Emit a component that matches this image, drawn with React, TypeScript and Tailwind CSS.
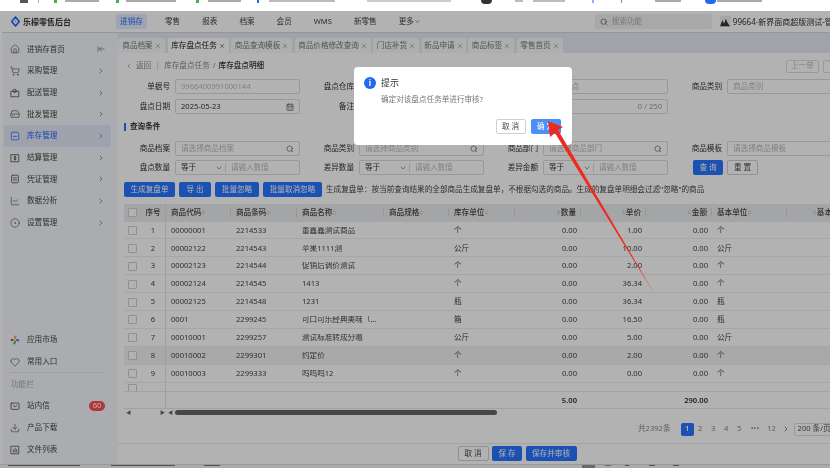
import {
  ArrowLeftToLine,
  CalendarDays,
  ChevronDown,
  ChevronLeft,
  ChevronRight,
  ChevronsUpDown,
  CircleDot,
  Download,
  HardDrive,
  Heart,
  Home,
  LineChart,
  Search,
  ShoppingCart,
  X,
} from "lucide-react";
import type { ComponentType, ReactNode } from "react";

const fontStack = "font-['Noto_Sans','Noto_Sans_CJK_SC',sans-serif]";

type IconProps = { className?: string; strokeWidth?: number };

function BoxIcon({ children, className }: { children: ReactNode; className?: string }) {
  return (
    <svg
      viewBox="0 0 12 12"
      fill="none"
      stroke="currentColor"
      strokeWidth="0.9"
      strokeLinecap="round"
      strokeLinejoin="round"
      className={className}
    >
      {children}
    </svg>
  );
}

const DeliveryIcon = ({ className }: IconProps) => (
  <BoxIcon className={className}>
    <path d="M1.5 4h9v6.5h-9z" />
    <circle cx="5.5" cy="3.5" r="2" />
  </BoxIcon>
);
const StockIcon = ({ className }: IconProps) => (
  <BoxIcon className={className}>
    <path d="M2.5 1.5h7l1 2v6a1 1 0 0 1-1 1h-7a1 1 0 0 1-1-1v-6z" />
    <path d="M4 6.5h4" />
  </BoxIcon>
);
const SettleIcon = ({ className }: IconProps) => (
  <BoxIcon className={className}>
    <path d="M1.5 2h9v8.5h-9z" />
    <path d="M7.2 4.6C6.4 3.9 4.8 4.1 4.8 5.1c0 1.3 2.4.7 2.4 2 0 1-1.6 1.2-2.4.5M6 3.5v5" />
  </BoxIcon>
);
const VoucherIcon = ({ className }: IconProps) => (
  <BoxIcon className={className}>
    <rect x="2" y="1.5" width="8" height="9" rx="1" />
    <path d="M4 4.7h4M4 7.2h4" />
  </BoxIcon>
);
const MailIcon = ({ className }: IconProps) => (
  <BoxIcon className={className}>
    <rect x="1.2" y="2.5" width="9.6" height="7.5" rx="0.8" />
    <path d="M3.8 5.2 6 7l2.2-1.8" />
  </BoxIcon>
);
const FileListIcon = ({ className }: IconProps) => (
  <BoxIcon className={className}>
    <path d="M1.5 1.5h9v9h-9z" />
    <path d="M4 8.5V6M6 8.5V3.8M8 8.5V5.5" />
  </BoxIcon>
);

const navItems = ["零售", "报表", "档案", "会员", "WMS", "新零售"];

const sideItems: { icon: ComponentType<IconProps>; label: string; active?: boolean }[] = [
  { icon: Home, label: "进销存首页" },
  { icon: ShoppingCart, label: "采购管理" },
  { icon: DeliveryIcon, label: "配送管理" },
  { icon: HardDrive, label: "批发管理" },
  { icon: StockIcon, label: "库存管理", active: true },
  { icon: SettleIcon, label: "结算管理" },
  { icon: VoucherIcon, label: "凭证管理" },
  { icon: LineChart, label: "数据分析" },
  { icon: CircleDot, label: "设置管理" },
];

const tabs = [
  { label: "商品档案", w: "w-[47px]" },
  { label: "库存盘点任务", w: "w-[61px]", active: true },
  { label: "商品查询模板", w: "w-[61px]" },
  { label: "商品价格修改查询", w: "w-[76px]" },
  { label: "门店补货", w: "w-[46px]" },
  { label: "新品申请", w: "w-[44px]" },
  { label: "商品标签", w: "w-[46px]" },
  { label: "零售首页", w: "w-[46px]" },
];

const rows = [
  ["1", "00000001", "2214533", "董鑫鑫测试商品", "个", "0.00", "1.00", "0.00", "个"],
  ["2", "00002122", "2214543", "苹果1111测", "公斤", "0.00", "10.00", "0.00", "公斤"],
  ["3", "00002123", "2214544", "促销后调价测试", "个", "0.00", "2.00", "0.00", "个"],
  ["4", "00002124", "2214545", "1413", "个", "0.00", "36.34", "0.00", "个"],
  ["5", "00002125", "2214548", "1231", "瓶", "0.00", "36.34", "0.00", "瓶"],
  ["6", "0001", "2299245", "可口可乐经典美味（…", "箱", "0.00", "16.50", "0.00", "瓶"],
  ["7", "00010001", "2299257", "测试标准转成分嗯", "公斤", "0.00", "5.00", "0.00", "公斤"],
  ["8", "00010002", "2299301", "约定价", "个", "0.00", "2.00", "0.00", "个"],
  ["9", "00010003", "2299333", "呜呜呜12", "个", "0.00", "0.00", "0.00", "个"],
];

const gridCols =
  "grid-cols-[17px_25px_65px_66px_87px_65px_66px_66px_65px_66px_75px_60px]";

const headers: { label: string; right?: boolean }[] = [
  { label: "商品代码" },
  { label: "商品条码" },
  { label: "商品名称" },
  { label: "商品规格" },
  { label: "库存单位" },
  { label: "数量", right: true },
  { label: "单价", right: true },
  { label: "金额", right: true },
  { label: "基本单位" },
];

function Field({
  label,
  span,
  children,
}: {
  label: string;
  span?: boolean;
  children: ReactNode;
}) {
  return (
    <div className={`flex items-center ${span ? "col-span-2" : ""}`}>
      <span className="w-[46px] shrink-0 text-right text-[#333]">{label}</span>
      <div
        className={`ml-[5px] flex h-[15px] items-center rounded-[2px] border border-[#dcdcdc] px-[5px] ${
          span ? "w-[309px]" : "w-[125px]"
        }`}
      >
        {children}
      </div>
    </div>
  );
}

function NumberFilter() {
  return (
    <>
      <span className="w-[34px] shrink-0 text-[#333]">等于</span>
      <ChevronDown className="h-[8px] w-[8px] shrink-0 text-[#666]" />
      <span className="ml-[2px] mr-[5px] h-[10px] w-px bg-[#ddd]" />
      <span className="text-[#bbb]">请输入数值</span>
    </>
  );
}

function Btn({
  children,
  primary,
  w,
}: {
  children: ReactNode;
  primary?: boolean;
  w: string;
}) {
  return (
    <button
      type="button"
      className={`flex h-[15px] shrink-0 items-center justify-center whitespace-nowrap rounded-[2px] ${w} ${
        primary ? "bg-[#2874ff] text-white" : "border border-[#d0d0d0] bg-white text-[#444]"
      }`}
    >
      {children}
    </button>
  );
}

function Check() {
  return <span className="h-[9px] w-[9px] rounded-[1px] border border-[#cfcfcf] bg-white" />;
}

function MarketLogo() {
  return (
    <svg viewBox="0 0 12 12" className="h-[10px] w-[10px]">
      <path d="M5 1 8 1 6.5 5 5 5Z" fill="#f5a623" />
      <path d="M7 5 11 5 10.5 8 7 6.5Z" fill="#3c7bf0" />
      <path d="M7 7 6.5 11 4 11 5 7Z" fill="#38b26a" />
      <path d="M1 4.5 4.5 5 4.5 7 1 7.5Z" fill="#e5483f" />
    </svg>
  );
}

function Logo() {
  return (
    <svg viewBox="0 0 12 14" className="h-[11px] w-[9px]">
      <path d="M6 1 11 7 6 13 1 7Z" fill="none" stroke="#2468f2" strokeWidth="2.2" strokeLinejoin="round" />
      <circle cx="6" cy="7" r="1" fill="#37a0e8" />
    </svg>
  );
}

export default function App() {
  return (
    <div className={`relative flex h-[468px] w-[830px] flex-col overflow-hidden bg-white text-[7.6px] leading-none blur-[0.6px] ${fontStack}`}>
      {/* browser bookmark strip: only the feet of its letters are in the capture */}
      <div className="flex h-[11px] shrink-0 items-start overflow-hidden">
        <span className="ml-[20px] h-[3px] w-[8px] bg-[#555]" />
        <span className="ml-[10px] h-[3px] w-[1px] bg-[#8ab4f8]" />
        <span className="ml-[15px] h-[3px] w-[3px] bg-[#3bb54a]" />
        <span className="ml-[8px] h-[2px] w-[34px] bg-[#aaa]" />
        <span className="ml-[17px] h-[3px] w-[3px] bg-[#3bb54a]" />
        <span className="ml-[7px] h-[2px] w-[50px] bg-[#aaa]" />
        <span className="ml-[20px] h-[3px] w-[3px] bg-[#3bb54a]" />
        <span className="ml-[9px] h-[2px] w-[33px] bg-[#aaa]" />
        <span className="ml-[16px] h-[3px] w-[2px] bg-[#2468f2]" />
        <span className="ml-[10px] h-[2px] w-[66px] bg-[#bbb]" />
        <span className="ml-[32px] h-[2px] w-[84px] bg-[#ccc]" />
        <span className="ml-[30px] h-[4px] w-[11px] rounded-b-full bg-[#333]" />
        <span className="ml-[23px] h-[2px] w-[8px] bg-[#bbb]" />
        <span className="ml-[10px] h-[2px] w-[32px] bg-[#bbb]" />
        <span className="ml-[27px] h-[3px] w-[2px] bg-[#8ab4f8]" />
        <span className="ml-[27px] h-[3px] w-[1px] bg-[#888]" />
        <span className="ml-[33px] h-[2px] w-[26px] bg-[#aaa]" />
        <span className="ml-[24px] h-[4px] w-[11px] rounded-b-full bg-[#2468f2]" />
        <span className="ml-[1px] h-[2px] w-[45px] bg-[#aaa]" />
      </div>

      {/* app window */}
      <div className="ml-[2px] flex h-[453px] shrink-0 flex-col overflow-hidden rounded-bl-[3px] bg-white">
        <header className="flex h-[22px] shrink-0 items-center border-b border-[#d5d8dd] bg-white">
          <div className="flex w-[114px] shrink-0 items-center gap-[3px] pl-[9px]">
            <Logo />
            <span className="text-[8px] font-semibold text-[#333]">乐檬零售后台</span>
          </div>
          <span className="flex h-[15px] w-[31px] shrink-0 items-center justify-center rounded-[2px] bg-[#e3ebfc] text-[#2468f2]">进销存</span>
          <div className="ml-[18px] flex shrink-0 items-center gap-[22px] text-[#444]">
            {navItems.map((n) => (
              <span key={n}>{n}</span>
            ))}
            <span className="flex items-center">
              更多<ChevronDown className="h-[7px] w-[7px]" />
            </span>
          </div>
          <div className="ml-[174px] flex h-[15px] w-[117px] shrink-0 items-center gap-[4px] rounded-[2px] bg-[#f0f1f3] pl-[5px] text-[#aaa]">
            <Search className="h-[8px] w-[8px] text-[#555]" />
            搜索功能
          </div>
          <span className="ml-[8px] flex h-[11px] w-[11px] shrink-0 items-center justify-center bg-[#eee]">
            <svg viewBox="0 0 12 12" className="h-[10px] w-[10px]">
              <path d="M0 11 3 4 5 8 7 2 9 7 12 11Z" fill="#333" />
            </svg>
          </span>
          <span className="ml-[2px] shrink-0 whitespace-nowrap text-[8px] text-[#333]">99664-新界面商超版测试-管理</span>
        </header>

        <div className="flex min-h-0 flex-1">
          <aside className="flex w-[116px] shrink-0 flex-col bg-[#f4f6fb] pb-[3.5px] pl-[2px] pr-[7px] pt-[5.5px] text-[#444]">
            {sideItems.map(({ icon: Icon, label, active }) => (
              <div
                key={label}
                className={`flex h-[21.7px] items-center rounded-[3px] pl-[6px] pr-[6px] ${
                  active ? "bg-[#e3e8f8] text-[#2468f2]" : ""
                }`}
              >
                <Icon className="h-[10px] w-[10px] shrink-0" strokeWidth={1.4} />
                <span className="ml-[7px] flex-1">{label}</span>
                {label === "进销存首页" ? (
                  <ArrowLeftToLine className="h-[8px] w-[8px] text-[#666]" />
                ) : (
                  <ChevronRight className={`h-[8px] w-[8px] ${active ? "text-[#2468f2]" : "text-[#666]"}`} />
                )}
              </div>
            ))}
            <div className="mt-auto flex h-[21.7px] items-center pl-[6px]">
              <MarketLogo />
              <span className="ml-[7px]">应用市场</span>
            </div>
            <div className="flex h-[21.7px] items-center pl-[6px]">
              <Heart className="h-[10px] w-[10px]" strokeWidth={1.4} />
              <span className="ml-[7px]">常用入口</span>
            </div>
            <div className="mx-[6px] border-t border-[#e4e6ea]" />
            <div className="flex h-[22px] items-center pl-[7px] text-[#aaa]">功能栏</div>
            <div className="flex h-[21.7px] items-center pl-[6px] pr-[6px]">
              <MailIcon className="h-[10px] w-[10px]" />
              <span className="ml-[7px] flex-1">站内信</span>
              <span className="flex h-[10px] w-[16px] items-center justify-center rounded-full bg-[#ff4d4f] text-white">60</span>
            </div>
            <div className="flex h-[21.7px] items-center pl-[6px]">
              <Download className="h-[10px] w-[10px]" strokeWidth={1.4} />
              <span className="ml-[7px]">产品下载</span>
            </div>
            <div className="flex h-[21.7px] items-center pl-[6px]">
              <FileListIcon className="h-[10px] w-[10px]" />
              <span className="ml-[7px]">文件列表</span>
            </div>
          </aside>

          <main className="flex min-w-0 flex-1 flex-col overflow-hidden bg-white">
            <div className="flex h-[20px] shrink-0 items-end gap-[2.5px] bg-[#e6eaf2]">
              {tabs.map((t) => (
                <div
                  key={t.label}
                  className={`flex h-[15px] shrink-0 items-center justify-center gap-[2px] whitespace-nowrap rounded-t-[2px] ${t.w} ${
                    t.active ? "bg-white text-[#222]" : "bg-[#f8f9fb] text-[#777]"
                  }`}
                >
                  {t.label}
                  <X className="h-[6px] w-[6px]" strokeWidth={2} />
                </div>
              ))}
            </div>

            <div className="flex min-h-0 flex-1 flex-col pl-[6px]">
              <div className="flex h-[26px] w-[732px] shrink-0 items-center justify-between whitespace-nowrap text-[#888]">
                <div className="flex items-center">
                  <ChevronLeft className="ml-[1px] h-[8px] w-[8px]" />
                  <span className="ml-[3px]">返回</span>
                  <span className="mx-[6px] h-[8px] w-px bg-[#ddd]" />
                  <span>库存盘点任务</span>
                  <span className="mx-[3px]">/</span>
                  <span className="font-medium text-[#333]">库存盘点明细</span>
                </div>
                <div className="flex items-center gap-[4px] text-[#bbb]">
                  <span className="flex h-[13px] w-[33px] items-center justify-center rounded-[2px] border border-[#ddd]">上一单</span>
                  <span className="flex h-[13px] w-[33px] items-center justify-center rounded-[2px] border border-[#ddd]">下一单</span>
                </div>
              </div>

              <div className="grid shrink-0 grid-cols-[repeat(4,184px)] gap-y-[5px]">
                <Field label="单据号">
                  <span className="text-[#bbb]">9966400991000144</span>
                </Field>
                <Field label="盘点仓库" span>
                  <span className="pl-[199px] text-[#bbb]">盘点</span>
                </Field>
                <Field label="商品类别">
                  <span className="text-[#bbb]">商品类别</span>
                </Field>
                <Field label="盘点日期">
                  <span className="flex-1 text-[#333]">2025-05-23</span>
                  <CalendarDays className="h-[8px] w-[8px] text-[#555]" />
                </Field>
                <Field label="备注" span>
                  <span className="flex-1 text-right text-[#999]">0 / 250</span>
                </Field>
              </div>

              <div className="mt-[7px] flex h-[12px] shrink-0 items-center font-semibold text-[#333]">
                <span className="mr-[4px] h-[8px] w-[2px] bg-[#2874ff]" />
                查询条件
              </div>

              <div className="mt-[8px] grid shrink-0 grid-cols-[repeat(4,184px)] gap-y-[4px]">
                <Field label="商品档案">
                  <span className="flex-1 text-[#bbb]">请选择商品档案</span>
                  <Search className="h-[8px] w-[8px] text-[#555]" />
                </Field>
                <Field label="商品类别">
                  <span className="flex-1 text-[#bbb]">请选择商品类别</span>
                  <Search className="h-[8px] w-[8px] text-[#555]" />
                </Field>
                <Field label="商品部门">
                  <span className="flex-1 text-[#bbb]">请选择商品部门</span>
                  <Search className="h-[8px] w-[8px] text-[#555]" />
                </Field>
                <Field label="商品模板">
                  <span className="text-[#bbb]">请选择商品模板</span>
                </Field>
                <Field label="盘点数量">
                  <NumberFilter />
                </Field>
                <Field label="差异数量">
                  <NumberFilter />
                </Field>
                <Field label="差异金额">
                  <NumberFilter />
                </Field>
                <div className="ml-[17px] flex gap-[4px]">
                  <Btn primary w="w-[30px]">查 询</Btn>
                  <Btn w="w-[31px]">重 置</Btn>
                </div>
              </div>

              <div className="mt-[7px] flex shrink-0 items-center gap-[4px]">
                <Btn primary w="w-[51px]">生成复盘单</Btn>
                <Btn primary w="w-[32px]">导 出</Btn>
                <Btn primary w="w-[44px]">批量忽略</Btn>
                <Btn primary w="w-[59px]">批量取消忽略</Btn>
                <span className="whitespace-nowrap text-[#444]">
                  生成复盘单：按当前查询结果的全部商品生成复盘单，不根据勾选的商品。生成的复盘单明细会过滤"忽略"的商品
                </span>
              </div>

              <div className="mt-[6.5px] h-[205px] shrink-0 overflow-hidden">
                <div className={`grid h-[18px] w-[846px] items-center bg-[#ebecef] font-medium text-[#444] ${gridCols}`}>
                  <span className="flex justify-center"><Check /></span>
                  <span className="flex h-[18px] items-center justify-center border-r border-[#dedede]">序号</span>
                  {headers.map((h) => (
                    <span
                      key={h.label}
                      className={`flex h-[9px] items-center whitespace-nowrap border-r border-[#d8d8d8] ${
                        h.right ? "justify-end pr-[4px]" : "pl-[5px]"
                      }`}
                    >
                      {h.right && (
                        <ChevronsUpDown
                          className={`h-[7px] w-[5px] ${h.label === "数量" ? "text-[#2874ff]" : "text-[#888]"}`}
                        />
                      )}
                      {h.label}
                      {!h.right && <ChevronsUpDown className="h-[7px] w-[5px] text-[#888]" />}
                    </span>
                  ))}
                  <span className="flex items-center justify-end whitespace-nowrap pr-[15px]">
                    <ChevronsUpDown className="h-[7px] w-[5px] text-[#888]" />
                    基本
                  </span>
                </div>
                <div className="h-[169px] overflow-hidden">
                  {rows.map((r) => (
                    <div
                      key={r[0]}
                      className={`grid h-[17.9px] w-[846px] items-center border-b border-[#eee] text-[#444] ${gridCols} ${
                        r[0] === "8" ? "bg-[#f3f3f3]" : ""
                      }`}
                    >
                      <span className="flex justify-center"><Check /></span>
                      <span className="flex h-[17.9px] items-center justify-center border-r border-[#e4e4e4]">{r[0]}</span>
                      <span className="pl-[5px]">{r[1]}</span>
                      <span className="pl-[5px]">{r[2]}</span>
                      <span className="truncate pl-[5px]">{r[3]}</span>
                      <span />
                      <span className="pl-[5px]">{r[4]}</span>
                      <span className="pr-[4px] text-right">{r[5]}</span>
                      <span className="pr-[4px] text-right">{r[6]}</span>
                      <span className="pr-[4px] text-right">{r[7]}</span>
                      <span className="pl-[5px]">{r[8]}</span>
                    </div>
                  ))}
                  {/* tenth row, cut off right under its top edge */}
                  <div className={`grid h-[18px] w-[846px] pt-[1px] ${gridCols}`}>
                    <span className="flex justify-center"><Check /></span>
                    <span className="h-[18px] border-r border-[#e4e4e4]" />
                  </div>
                </div>
                <div className={`grid h-[18px] w-[846px] items-center border-y border-[#e8e8e8] font-semibold text-[#333] ${gridCols}`}>
                  <span />
                  <span className="h-[18px] border-r border-[#e4e4e4]" />
                  <span className="col-span-5" />
                  <span className="pr-[4px] text-right">5.00</span>
                  <span />
                  <span className="pr-[4px] text-right">290.00</span>
                </div>
              </div>

              <div className="flex h-[7px] shrink-0 items-center text-[5px] text-[#666]">
                <span className="ml-[2px]">◀</span>
                <span className="ml-[29px]">▶</span>
                <span className="ml-[3px]">◀</span>
                <span className="ml-[2px] h-[5px] w-[322px] rounded-full bg-[#666]" />
              </div>

              <div className="flex h-[27px] shrink-0 items-center whitespace-nowrap text-[#888]">
                <span className="ml-[514px]">共2392条</span>
                <ChevronLeft className="ml-[7px] h-[8px] w-[8px] text-[#bbb]" />
                <span className="ml-[3px] flex h-[13px] w-[13px] shrink-0 items-center justify-center rounded-[2px] bg-[#2874ff] font-semibold text-white">1</span>
                <span className="w-[13px] shrink-0 text-center">2</span>
                <span className="w-[13px] shrink-0 text-center">3</span>
                <span className="w-[13px] shrink-0 text-center">4</span>
                <span className="w-[13px] shrink-0 text-center">5</span>
                <span className="w-[19px] shrink-0 text-center">•••</span>
                <span className="w-[14px] shrink-0 text-center">12</span>
                <ChevronRight className="ml-[3px] h-[8px] w-[8px] shrink-0 text-[#444]" />
                <span className="ml-[4px] flex h-[13px] w-[40px] shrink-0 items-center rounded-[2px] border border-[#ddd] pl-[3px] text-[#555]">200 条/页</span>
              </div>

              <div className="-ml-[6px] flex flex-1 items-center justify-center gap-[3.5px] border-t border-[#e8e8e8] pl-[86px]">
                <Btn w="w-[31px]">取 消</Btn>
                <Btn primary w="w-[30px]">保 存</Btn>
                <Btn primary w="w-[51px]">保存并审核</Btn>
              </div>
            </div>
          </main>
        </div>
      </div>

      {/* top edge of the window behind the app: only slivers of its letters show */}
      <div className="flex flex-1 items-start overflow-hidden border-t border-[#d8d8d8] bg-[#f4f6f5]">
        <span className="ml-[8px] h-px w-[72px] bg-[#777]" />
        <span className="ml-[31px] h-px w-[64px] bg-[#777]" />
        <span className="ml-[29px] h-px w-[16px] bg-[#777]" />
        <span className="ml-[362px] h-[3px] w-[13px] bg-[#999]" />
        <span className="ml-[10px] h-px w-[6px] bg-[#999]" />
        <span className="ml-[14px] h-px w-[4px] bg-[#777]" />
        <span className="ml-[20px] h-px w-[6px] bg-[#777]" />
        <span className="ml-[18px] h-px w-[6px] bg-[#777]" />
      </div>

      {/* dialog mask */}
      <div className="absolute inset-x-0 bottom-0 top-[11px] bg-black/30" />

      <div className="absolute left-[354px] top-[66.5px] h-[78px] w-[217.5px] rounded-[4px] bg-white pl-[10px] pr-[11px] pt-[10px]">
        <div className="flex items-center">
          <span className="flex h-[12px] w-[12px] items-center justify-center rounded-full bg-[#2468f2] text-[8px] font-bold text-white">i</span>
          <span className="ml-[5px] text-[9px] text-[#333]">提示</span>
        </div>
        <div className="ml-[17px] mt-[7px] text-[#777]">确定对该盘点任务单进行审核?</div>
        <div className="mt-[16px] flex justify-end gap-[5px]">
          <Btn w="w-[30px]">取 消</Btn>
          <button
            type="button"
            className="flex h-[15px] w-[30px] items-center justify-center rounded-[2px] bg-[#4e8ef7] text-white"
          >
            确 定
          </button>
        </div>
      </div>

      {/* red annotation arrow */}
      <svg className="absolute left-0 top-0" width="830" height="468" viewBox="0 0 830 468">
        <defs>
          <linearGradient id="arrowFade" x1="548" y1="121" x2="660" y2="303" gradientUnits="userSpaceOnUse">
            <stop offset="0.8" stopColor="#ee2a1f" />
            <stop offset="1" stopColor="#ee2a1f" stopOpacity="0.15" />
          </linearGradient>
        </defs>
        <polygon points="548,121 563,127 558,130 660,303 555,133 550,137" fill="url(#arrowFade)" />
      </svg>
    </div>
  );
}
